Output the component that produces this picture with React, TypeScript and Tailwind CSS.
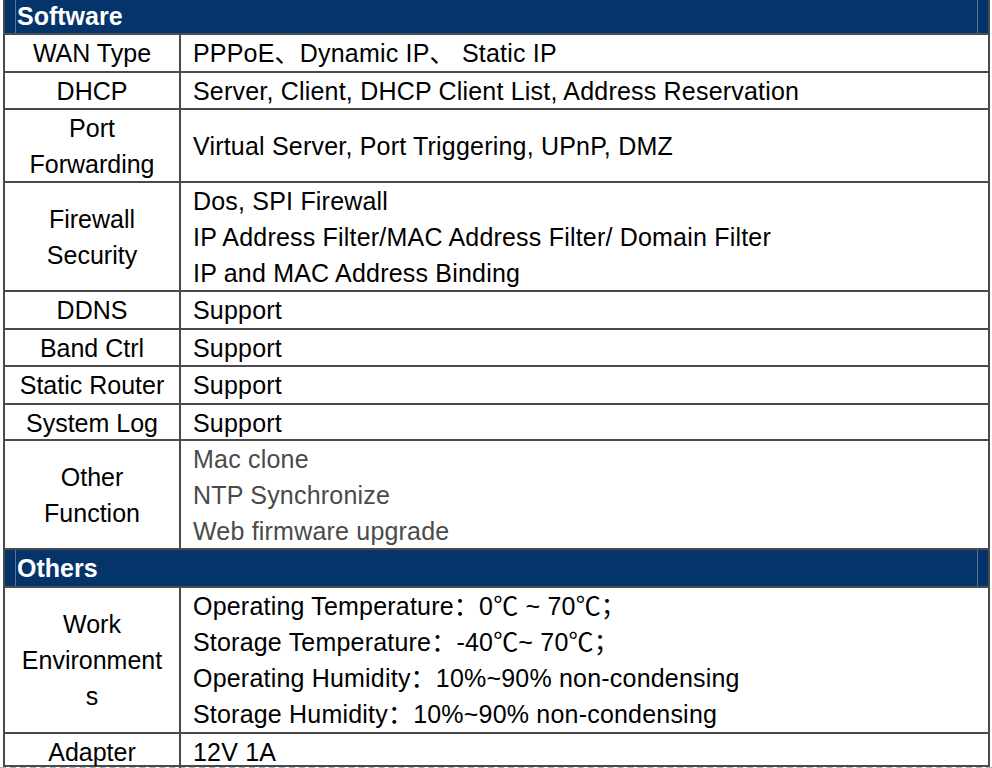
type Row = {
  label: string[]
  lines: string[]
  h: string
  muted?: boolean
}

const softwareRows: Row[] = [
  { label: ["WAN Type"], lines: ["PPPoE、Dynamic IP、 Static IP"], h: "h-[38px]" },
  { label: ["DHCP"], lines: ["Server, Client, DHCP Client List, Address Reservation"], h: "h-[37px]" },
  { label: ["Port", "Forwarding"], lines: ["Virtual Server, Port Triggering, UPnP, DMZ"], h: "h-[73px]" },
  {
    label: ["Firewall", "Security"],
    lines: [
      "Dos, SPI Firewall",
      "IP Address Filter/MAC Address Filter/ Domain Filter",
      "IP and MAC Address Binding",
    ],
    h: "h-[109px]",
  },
  { label: ["DDNS"], lines: ["Support"], h: "h-[38px]" },
  { label: ["Band Ctrl"], lines: ["Support"], h: "h-[37px]" },
  { label: ["Static Router"], lines: ["Support"], h: "h-[38px]" },
  { label: ["System Log"], lines: ["Support"], h: "h-[36px]" },
  {
    label: ["Other", "Function"],
    lines: ["Mac clone", "NTP Synchronize", "Web firmware upgrade"],
    h: "h-[109px]",
    muted: true,
  },
]

const otherRows: Row[] = [
  {
    label: ["Work", "Environment", "s"],
    lines: [
      "Operating Temperature：0℃ ~ 70℃；",
      "Storage Temperature：-40℃~ 70℃；",
      "Operating Humidity：10%~90% non-condensing",
      "Storage Humidity：10%~90% non-condensing",
    ],
    h: "h-[146px]",
  },
  { label: ["Adapter"], lines: ["12V 1A"], h: "h-[33px]" },
]

function SectionHeader({ title, h }: { title: string; h: string }) {
  return (
    <div className={`${h} bg-[#04346a] border-b-2 border-[#4a4f57] flex pl-[10px] pr-[10px]`}>
      <div className="flex-1 border-l border-r border-[#5676a0] flex items-center pl-[1px]">
        <span className="text-white font-bold text-[25px] leading-none">{title}</span>
      </div>
    </div>
  )
}

function SpecRow({ row }: { row: Row }) {
  return (
    <div className={`${row.h} grid grid-cols-[176px_1fr] border-b-2 border-[#4a4a4a]`}>
      <div className="border-r-2 border-[#4a4a4a] flex flex-col items-center justify-center text-center leading-[36px]">
        {row.label.map((l, i) => (
          <span key={i}>{l}</span>
        ))}
      </div>
      <div
        className={`flex flex-col justify-center pl-[12px] leading-[36px] tracking-[0.2px] ${
          row.muted ? "text-[#4a4a4a]" : "text-black"
        }`}
      >
        {row.lines.map((l, i) => (
          <span key={i} className="whitespace-pre">
            {l}
          </span>
        ))}
      </div>
    </div>
  )
}

export default function App() {
  return (
    <div className="w-[992px] h-[768px] bg-white overflow-hidden font-['Liberation_Sans','Noto_Sans_CJK_SC',sans-serif] text-[25px] text-black">
      <div className="ml-[3px] w-[987px] border-l-2 border-r-2 border-[#4a4a4a]">
        <SectionHeader title="Software" h="h-[35px]" />
        {softwareRows.map((r, i) => (
          <SpecRow key={i} row={r} />
        ))}
        <SectionHeader title="Others" h="h-[38px]" />
        {otherRows.map((r, i) => (
          <SpecRow key={i} row={r} />
        ))}
      </div>
      <div className="h-[2px] border-t-2 border-dashed border-[#9db4d0]" />
    </div>
  )
}
